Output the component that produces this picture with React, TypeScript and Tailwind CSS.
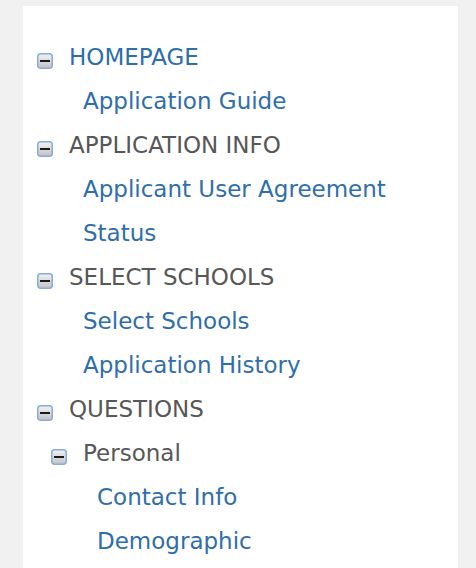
import React from 'react';

type Node = { label: string; link?: boolean; children?: Node[] };

const tree: Node[] = [
  { label: 'HOMEPAGE', link: true, children: [{ label: 'Application Guide', link: true }] },
  {
    label: 'APPLICATION INFO',
    children: [
      { label: 'Applicant User Agreement', link: true },
      { label: 'Status', link: true },
    ],
  },
  {
    label: 'SELECT SCHOOLS',
    children: [
      { label: 'Select Schools', link: true },
      { label: 'Application History', link: true },
    ],
  },
  {
    label: 'QUESTIONS',
    children: [
      {
        label: 'Personal',
        children: [
          { label: 'Contact Info', link: true },
          { label: 'Demographic', link: true },
        ],
      },
    ],
  },
];

// collapse toggle, expanded state
function MinusBox() {
  return (
    <svg width="16" height="16" viewBox="0 0 16 16" className="shrink-0 translate-y-[4px]">
      <defs>
        <linearGradient id="mb" x1="0" y1="0" x2="0" y2="1">
          <stop offset="0" stopColor="#f2f2f2" />
          <stop offset="1" stopColor="#c2c2c2" />
        </linearGradient>
      </defs>
      <rect x="0.75" y="0.75" width="14.5" height="14.5" rx="3" fill="url(#mb)" stroke="#86acdc" strokeWidth="1.5" />
      <rect x="3" y="7" width="10" height="2" fill="#1a1a1a" />
    </svg>
  );
}

function TreeNode({ node, depth }: { node: Node; depth: number }) {
  const color = node.link ? 'text-[#2f6eaa]' : 'text-[#575757]';
  const hasKids = !!node.children;
  return (
    <li>
      <div className="flex h-[44px] items-center" style={{ paddingLeft: depth * 14 }}>
        {hasKids ? (
          <>
            <MinusBox />
            <span className={`ml-[16px] ${color}`}>{node.label}</span>
          </>
        ) : (
          <span className={`ml-[32px] ${color}`}>{node.label}</span>
        )}
      </div>
      {hasKids && (
        <ul>
          {node.children!.map((c) => (
            <TreeNode key={c.label} node={c} depth={depth + 1} />
          ))}
        </ul>
      )}
    </li>
  );
}

export default function App() {
  return (
    <div className="min-h-[568px] bg-[#f1f1f1] pt-[6px]">
      <div
        className="ml-[23px] h-[562px] w-[435px] bg-white pl-[14px] pt-[29px] text-[23px] leading-none"
        style={{ fontFamily: '"DejaVu Sans", Verdana, sans-serif' }}
      >
        <ul>
          {tree.map((n) => (
            <TreeNode key={n.label} node={n} depth={0} />
          ))}
        </ul>
      </div>
    </div>
  );
}
